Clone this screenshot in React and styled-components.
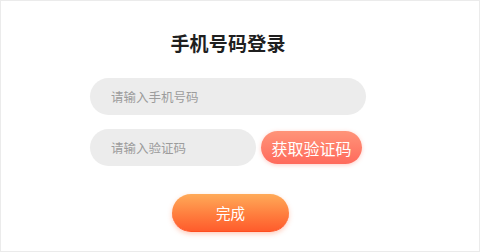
import React from "react"
import styled, { createGlobalStyle } from "styled-components"

const GlobalStyle = createGlobalStyle`
  html, body {
    margin: 0;
    padding: 0;
    background: #fff;
  }
  body {
    font-family: "Noto Sans CJK SC", "Noto Sans", sans-serif;
  }
`

const Page = styled.div`
  width: 480px;
  height: 252px;
  box-sizing: border-box;
  border: 1px solid #ebebeb;
  background: #fff;
  padding: 32px 0 0 89px;
`

const Form = styled.div`
  width: 276px;
  display: flex;
  flex-direction: column;
  align-items: flex-start;
`

const Title = styled.h1`
  align-self: center;
  margin: 0;
  font-size: 19px;
  line-height: 19px;
  font-weight: 700;
  color: #1f1f1f;
  letter-spacing: 0.2px;
`

const Field = styled.input`
  width: ${p => p.$width}px;
  height: 37px;
  box-sizing: border-box;
  border: none;
  outline: none;
  border-radius: 19px;
  background: #ececec;
  padding: 0 0 0 21px;
  font-family: inherit;
  font-size: 12.5px;
  color: #333;
  &::placeholder {
    color: #9c9c9c;
  }
`

const Row = styled.div`
  display: flex;
  align-items: center;
  gap: 5px;
  margin-top: ${p => p.$top}px;
`

const CodeButton = styled.button`
  width: 101px;
  height: 33px;
  border: none;
  border-radius: 17px;
  background: linear-gradient(180deg, #ff9479 0%, #ff6a5c 100%);
  box-shadow: 0 1px 4px rgba(255, 110, 90, 0.35);
  color: #fff;
  font-family: inherit;
  font-size: 16px;
  padding: 0;
  cursor: pointer;
`

const DoneButton = styled.button`
  margin: 28px 0 0 82px;
  width: 117px;
  height: 38px;
  border: none;
  border-bottom: 1px solid #ff4d1f;
  border-radius: 19px;
  background: linear-gradient(180deg, #ffaa58 0%, #ff7a3c 60%, #ff5c2c 100%);
  box-shadow: 0 2px 5px rgba(255, 110, 60, 0.35);
  color: #fff;
  font-family: inherit;
  font-size: 14.5px;
  padding: 0;
  cursor: pointer;
`

export default function App() {
  return (
    <>
      <GlobalStyle />
      <Page>
        <Form>
          <Title>手机号码登录</Title>
          <Row $top={26}>
            <Field $width={276} placeholder="请输入手机号码" />
          </Row>
          <Row $top={14}>
            <Field $width={166} placeholder="请输入验证码" />
            <CodeButton>获取验证码</CodeButton>
          </Row>
          <DoneButton>完成</DoneButton>
        </Form>
      </Page>
    </>
  )
}
